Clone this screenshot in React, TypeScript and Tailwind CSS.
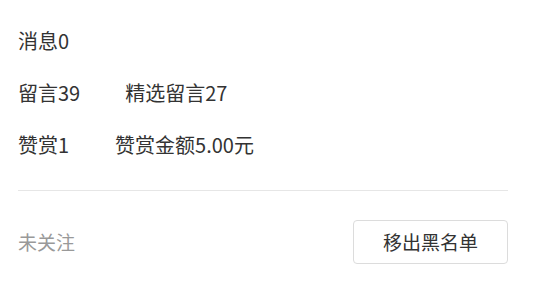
export default function App() {
  return (
    <div
      className="w-[549px] h-[294px] bg-white text-[#333] text-[20px]"
      style={{ fontFamily: '"Noto Sans CJK SC", "Noto Sans", sans-serif' }}
    >
      <div className="ml-[18px] w-[490px] pt-[29px]">
        <div className="flex flex-col gap-[28px]">
          <div className="leading-[24px] h-[24px]">消息0</div>
          <div className="leading-[24px] h-[24px] flex">
            <span>留言39</span>
            <span className="ml-[45px]">精选留言27</span>
          </div>
          <div className="leading-[24px] h-[24px] flex">
            <span>赞赏1</span>
            <span className="ml-[46px]">赞赏金额5.00元</span>
          </div>
        </div>
        <div className="mt-[33px] h-px bg-[#e6e6e6]" />
        <div className="mt-[29px] flex items-center justify-between">
          <span className="text-[#999] text-[19px]">未关注</span>
          <button className="w-[155px] h-[44px] border border-[#dcdcdc] rounded-[4px] bg-white text-[#333] text-[19px]">
            移出黑名单
          </button>
        </div>
      </div>
    </div>
  );
}
